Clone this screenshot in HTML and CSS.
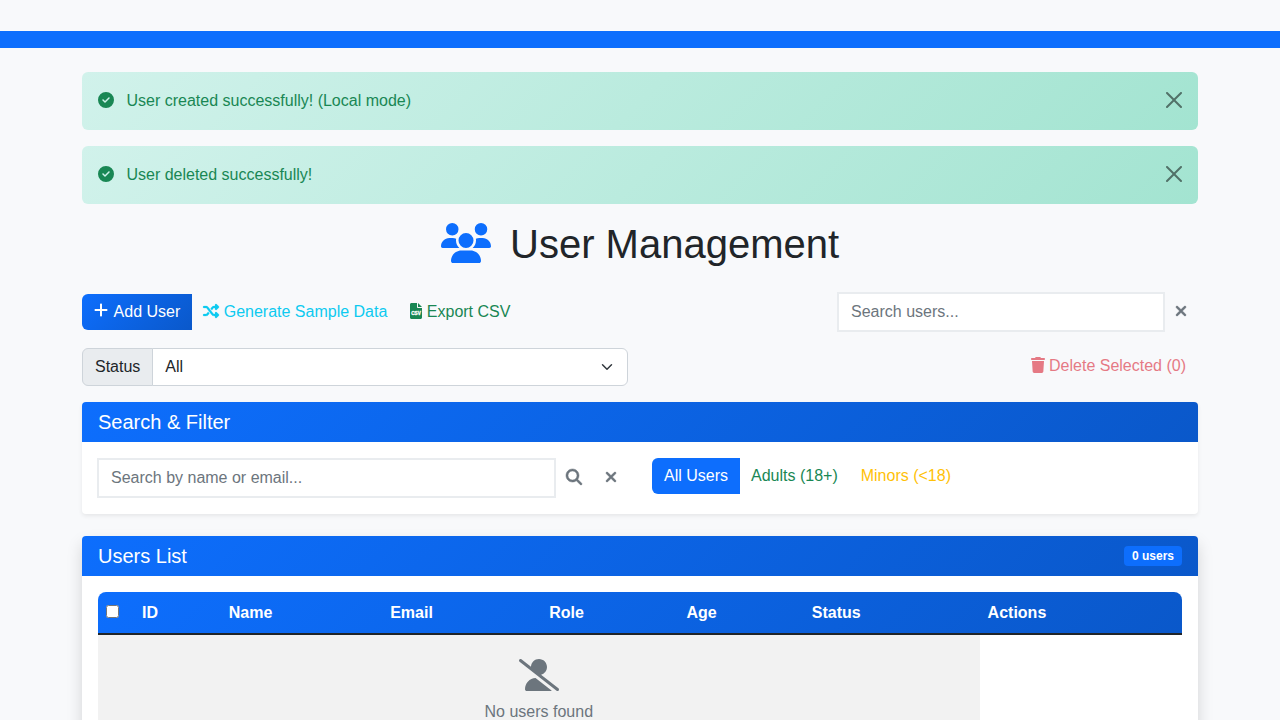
FILE: index.html
```html
<!DOCTYPE html>
<html lang="en">
<head>
<meta charset="utf-8">
<meta name="viewport" content="width=device-width, initial-scale=1">
<title>User Management</title>
<link rel="stylesheet" href="styles.css">
</head>
<body>
<svg class="sprite" aria-hidden="true">
  <symbol id="check" viewBox="0 0 512 512"><path d="M256 512A256 256 0 1 0 256 0a256 256 0 1 0 0 512zM369 209L241 337c-9.4 9.4-24.6 9.4-33.9 0l-64-64c-9.4-9.4-9.4-24.6 0-33.9s24.6-9.4 33.9 0l47 47L335 175c9.4-9.4 24.6-9.4 33.9 0s9.4 24.6 0 33.9z"/></symbol>
  <symbol id="close" viewBox="0 0 16 16"><path d="M.293.293a1 1 0 0 1 1.414 0L8 6.586 14.293.293a1 1 0 1 1 1.414 1.414L9.414 8l6.293 6.293a1 1 0 0 1-1.414 1.414L8 9.414l-6.293 6.293a1 1 0 0 1-1.414-1.414L6.586 8 .293 1.707a1 1 0 0 1 0-1.414z"/></symbol>
  <symbol id="xmark" viewBox="0 0 384 512"><path d="M342.6 150.6c12.5-12.5 12.5-32.8 0-45.3s-32.8-12.5-45.3 0L192 210.7 86.6 105.4c-12.5-12.5-32.8-12.5-45.3 0s-12.5 32.8 0 45.3L146.7 256 41.4 361.4c-12.5 12.5-12.5 32.8 0 45.3s32.8 12.5 45.3 0L192 301.3 297.4 406.6c12.5 12.5 32.8 12.5 45.3 0s12.5-32.8 0-45.3L237.3 256 342.6 150.6z"/></symbol>
</svg>

<nav class="topbar" aria-label="Main"></nav>

<main class="container">
  <div class="alert" role="alert">
    <span class="alert-text"><svg class="icon alert-icon"><use href="#check"/></svg> User created successfully! (Local mode)</span>
    <button type="button" class="alert-close" aria-label="Close"><svg class="icon"><use href="#close"/></svg></button>
  </div>
  <div class="alert" role="alert">
    <span class="alert-text"><svg class="icon alert-icon"><use href="#check"/></svg> User deleted successfully!</span>
    <button type="button" class="alert-close" aria-label="Close"><svg class="icon"><use href="#close"/></svg></button>
  </div>

  <h1 class="title">
    <svg class="title-icon" viewBox="0 0 640 512"><path d="M144 0a80 80 0 1 1 0 160A80 80 0 1 1 144 0zM512 0a80 80 0 1 1 0 160A80 80 0 1 1 512 0zM0 298.7C0 239.8 47.8 192 106.7 192h42.7c15.9 0 31 3.5 44.6 9.7c-1.3 7.2-1.9 14.7-1.9 22.3c0 38.2 16.8 72.5 43.3 96c-.2 0-.4 0-.7 0H21.3C9.6 320 0 310.4 0 298.7zM405.3 320c-.2 0-.4 0-.7 0c26.6-23.5 43.3-57.8 43.3-96c0-7.6-.7-15-1.9-22.3c13.6-6.3 28.7-9.7 44.6-9.7h42.7C592.2 192 640 239.8 640 298.7c0 11.8-9.6 21.3-21.3 21.3H405.3zM224 224a96 96 0 1 1 192 0 96 96 0 1 1 -192 0zM128 485.3C128 411.7 187.7 352 261.3 352H378.7C452.3 352 512 411.7 512 485.3c0 14.7-11.9 26.7-26.7 26.7H154.7c-14.7 0-26.7-11.9-26.7-26.7z"/></svg>
    User Management
  </h1>

  <div class="toolbar">
    <div class="btn-group">
      <button type="button" class="btn btn-gradient">
        <svg class="icon icon-plus" viewBox="0 0 448 512"><path d="M256 80c0-17.7-14.3-32-32-32s-32 14.3-32 32V224H48c-17.7 0-32 14.3-32 32s14.3 32 32 32H192V432c0 17.7 14.3 32 32 32s32-14.3 32-32V288H400c17.7 0 32-14.3 32-32s-14.3-32-32-32H256V80z"/></svg>
        Add User
      </button>
      <button type="button" class="btn btn-info">
        <svg class="icon icon-medium" viewBox="0 0 512 512"><path d="M403.8 34.4c12-5 25.7-2.2 34.9 6.9l64 64c6 6 9.4 14.1 9.4 22.6s-3.4 16.6-9.4 22.6l-64 64c-9.2 9.2-22.9 11.9-34.9 6.9s-19.8-16.6-19.8-29.6V160H352c-10.1 0-19.6 4.7-25.6 12.8L284 229.3 244 176l31.2-41.6C293.3 110.2 321.8 96 352 96h32V64c0-12.9 7.8-24.6 19.8-29.6zM164 282.7L204 336l-31.2 41.6C154.7 401.8 126.2 416 96 416H32c-17.7 0-32-14.3-32-32s14.3-32 32-32H96c10.1 0 19.6-4.7 25.6-12.8L164 282.7zm274.6 188c-9.2 9.2-22.9 11.9-34.9 6.9s-19.8-16.6-19.8-29.6V416H352c-30.2 0-58.7-14.2-76.8-38.4L121.6 172.8c-6-8.1-15.5-12.8-25.6-12.8H32c-17.7 0-32-14.3-32-32s14.3-32 32-32H96c30.2 0 58.7 14.2 76.8 38.4L326.4 339.2c6 8.1 15.5 12.8 25.6 12.8h32V320c0-12.9 7.8-24.6 19.8-29.6s25.7-2.2 34.9 6.9l64 64c6 6 9.4 14.1 9.4 22.6s-3.4 16.6-9.4 22.6l-64 64z"/></svg>
        Generate Sample Data
      </button>
      <button type="button" class="btn btn-success">
        <svg class="icon icon-narrow" viewBox="0 0 384 512" aria-hidden="true"><path d="M48 0C21.5 0 0 21.5 0 48V464c0 26.5 21.5 48 48 48H336c26.5 0 48-21.5 48-48V160H256c-17.7 0-32-14.3-32-32V0H48zM256 0V128H384L256 0z"/><text class="csv" x="192" y="380" text-anchor="middle">CSV</text></svg>
        Export CSV
      </button>
    </div>
    <div class="user-search">
      <input class="field" type="text" placeholder="Search users..." aria-label="Search users">
      <button type="button" class="btn btn-muted" aria-label="Clear search"><svg class="icon icon-narrow icon-bold"><use href="#xmark"/></svg></button>
    </div>
  </div>

  <div class="status-row">
    <div class="select-group">
      <label class="select-label" for="status">Status</label>
      <select class="select" id="status"><option>All</option><option>Active</option><option>Inactive</option></select>
    </div>
    <button type="button" class="btn btn-danger" disabled>
      <svg class="icon icon-trim" viewBox="0 0 448 512"><path d="M135.2 17.7L128 32H32C14.3 32 0 46.3 0 64S14.3 96 32 96H416c17.7 0 32-14.3 32-32s-14.3-32-32-32H320l-7.2-14.3C307.4 6.8 296.3 0 284.2 0H163.8c-12.1 0-23.2 6.8-28.6 17.7zM416 128H32L53.2 467c1.6 25.3 22.6 45 47.9 45H346.9c25.3 0 46.3-19.7 47.9-45L416 128z"/></svg>
      Delete Selected (0)
    </button>
  </div>

  <section class="card">
    <div class="card-header"><h2 class="card-title">Search &amp; Filter</h2></div>
    <div class="card-body filter">
      <div class="filter-search">
        <input class="field" type="text" placeholder="Search by name or email..." aria-label="Search by name or email">
        <button type="button" class="btn btn-muted" aria-label="Search"><svg class="icon icon-bold" viewBox="0 0 512 512"><path d="M416 208c0 45.9-14.9 88.3-40 122.7L502.6 457.4c12.5 12.5 12.5 32.8 0 45.3s-32.8 12.5-45.3 0L330.7 376c-34.4 25.2-76.8 40-122.7 40C93.1 416 0 322.9 0 208S93.1 0 208 0S416 93.1 416 208zM208 352a144 144 0 1 0 0-288 144 144 0 1 0 0 288z"/></svg></button>
        <button type="button" class="btn btn-muted" aria-label="Clear"><svg class="icon icon-narrow icon-bold"><use href="#xmark"/></svg></button>
      </div>
      <div class="btn-group">
        <button type="button" class="btn btn-primary">All Users</button>
        <button type="button" class="btn btn-success">Adults (18+)</button>
        <button type="button" class="btn btn-warning">Minors (&lt;18)</button>
      </div>
    </div>
  </section>

  <section class="card card-raised">
    <div class="card-header"><h2 class="card-title">Users List</h2><span class="badge">0 users</span></div>
    <div class="card-body">
      <table class="table">
        <thead>
          <tr><th class="c-check"><input class="check" type="checkbox" aria-label="Select all users"></th><th>ID</th><th>Name</th><th>Email</th><th>Role</th><th>Age</th><th>Status</th><th>Actions</th></tr>
        </thead>
        <tbody>
          <tr>
            <td class="empty" colspan="7">
              <svg class="empty-icon" viewBox="0 0 640 512"><path d="M38.8 5.1C28.4-3.1 13.3-1.2 5.1 9.2S-1.2 34.7 9.2 42.9l592 464c10.4 8.2 25.5 6.3 33.7-4.1s6.3-25.5-4.1-33.7L353.3 251.6C407.9 237 448 187.2 448 128C448 57.3 390.7 0 320 0C250.2 0 193.5 55.8 192 125.2L38.8 5.1zM264.3 304.3C170.5 309.4 96 387.2 96 482.3c0 16.4 13.3 29.7 29.7 29.7H514.3c3.9 0 7.6-.7 11-2.1l-261-205.6z"/></svg>
              <p class="empty-text">No users found</p>
            </td>
          </tr>
        </tbody>
      </table>
    </div>
  </section>
</main>
</body>
</html>
```
FILE: styles.css
```css
*, *::before, *::after { box-sizing: border-box; }

body {
  margin: 0;
  padding-top: 31px;
  background: #f8f9fb;
  color: #212529;
  font: 16px/24px "Liberation Sans", Arial, sans-serif;
}

svg { fill: currentColor; }
.sprite { display: none; }
.icon { width: 16px; height: 16px; vertical-align: -2px; overflow: visible; }
.icon-trim { width: 14px; }
.icon-plus { width: 14px; height: 18px; margin-right: 2px; }
.icon-narrow { width: 12px; }
.icon-medium { stroke: currentColor; stroke-width: 8; }
.icon-bold { stroke: currentColor; stroke-width: 16; }
.csv { fill: #fff; stroke: #fff; stroke-width: 10; font: bold 150px "Liberation Sans", Arial, sans-serif; }

.topbar { padding: 8px 0 9px; background: #0d6efd; }

.container {
  max-width: 1140px;
  margin: 0 auto;
  padding: 24px 12px;
}

.alert {
  display: flex;
  align-items: flex-start;
  margin-bottom: 16px;
  padding: 17px 16px;
  border-radius: 6px;
  background: linear-gradient(135deg, #d1f2eb, #a3e4d1);
  color: #198754;
}
.alert-text { flex: 1; }
.alert-icon { margin-right: 8px; }
.alert-close {
  display: flex;
  padding: 3px 0;
  border: 0;
  background: none;
  color: #000;
  opacity: .5;
}

.title {
  margin: 0 0 24px;
  font-size: 40px;
  line-height: 48px;
  font-weight: 400;
  text-align: center;
}
.title-icon {
  width: 50px;
  height: 40px;
  margin-right: 8px;
  color: #0d6efd;
  vertical-align: -5px;
}

.btn {
  padding: 6px 12px;
  border: 0;
  background: none;
  font: inherit;
  white-space: nowrap;
}
.btn-group { display: flex; }
.btn + .btn { margin-left: -1px; }
.btn-group .btn:first-child { border-radius: 6px 0 0 6px; }
.btn-gradient { background: linear-gradient(135deg, #0d6efd, #0a58ca); color: #fff; }
.btn-primary { background: #0d6efd; color: #fff; }
.btn-info { color: #0dcaf0; }
.btn-success { color: #198754; }
.btn-warning { color: #ffc107; }
.btn-muted { color: #6c757d; }
.btn-danger { color: #dc3545; opacity: .65; }

.field {
  flex: 1;
  min-width: 0;
  height: 40px;
  padding: 6px 12px;
  border: 2px solid #e9ecef;
  border-radius: 0;
  background: #fff;
  color: #212529;
  font: inherit;
}
.field::placeholder { color: #6c757d; opacity: 1; }

.toolbar {
  display: flex;
  align-items: center;
  justify-content: space-between;
  margin-bottom: 16px;
}
.user-search { display: flex; align-items: center; width: 362px; margin-right: -1px; }
.field + .btn { margin-left: -2px; }

.status-row {
  display: flex;
  align-items: flex-start;
  justify-content: space-between;
  gap: 24px;
  margin-bottom: 16px;
}
.select-group { display: flex; flex: 0 1 546px; }
.select-label {
  padding: 6px 12px;
  border: 1px solid #ced4da;
  border-radius: 6px 0 0 6px;
  background: #e9ecef;
}
.select {
  flex: 1;
  min-width: 0;
  height: 38px;
  margin-left: -1px;
  padding: 6px 36px 6px 12px;
  border: 1px solid #ced4da;
  border-radius: 0 6px 6px 0;
  appearance: none;
  background: #fff url("data:image/svg+xml,%3Csvg xmlns='http://www.w3.org/2000/svg' viewBox='0 0 16 16'%3E%3Cpath fill='none' stroke='%23343a40' stroke-linecap='round' stroke-linejoin='round' stroke-width='2' d='m2 5 6 6 6-6'/%3E%3C/svg%3E") no-repeat right 12px center / 16px 12px;
  color: #212529;
  font: inherit;
}

.card {
  margin-bottom: 22px;
  border-radius: 4px;
  background: #fff;
  box-shadow: 0 2px 4px rgba(0, 0, 0, .075);
}
.card-raised { box-shadow: 0 8px 16px rgba(0, 0, 0, .15); }
.card-header {
  display: flex;
  align-items: center;
  justify-content: space-between;
  padding: 8px 16px;
  border-radius: 4px 4px 0 0;
  background: linear-gradient(135deg, #0d6efd, #0a58ca);
  color: #fff;
}
.card-title { margin: 0; font-size: 20px; line-height: 24px; font-weight: 400; }
.card-body { padding: 16px; }
.badge {
  padding: 4px 8px;
  border-radius: 4px;
  background: #0d6efd;
  font-size: 12px;
  line-height: 12px;
  font-weight: 700;
}

.filter { display: flex; align-items: flex-start; gap: 23px; padding-left: 15px; }
.filter-search { display: flex; align-items: center; flex: 0 1 532px; }

.table {
  width: 100%;
  border-collapse: separate;
  border-spacing: 0;
  border-radius: 8px;
  overflow: hidden;
}
.table thead { background: linear-gradient(135deg, #0d6efd, #0a58ca); color: #fff; }
.table th {
  padding: 8px;
  height: 43px;
  border-bottom: 2px solid #212529;
  text-align: left;
  font-weight: 700;
}
.table .c-check { width: 36px; }
.check { display: block; width: 13px; height: 13px; margin: 0 0 3px; }
.empty { padding: 24px 8px; background: #f2f2f2; color: #6c757d; text-align: center; }
.empty-icon { display: block; width: 40px; height: 32px; margin: 0 auto 9px; }
.empty-text { margin: 0 0 16px; }
```
